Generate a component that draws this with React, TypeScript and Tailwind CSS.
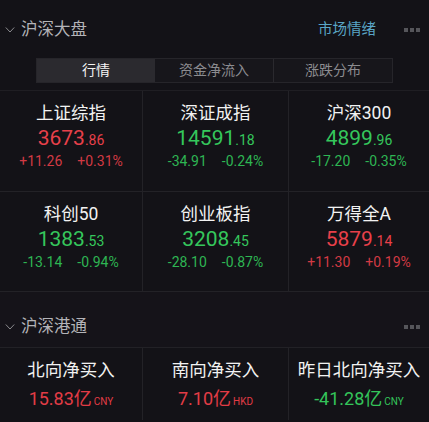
import React from "react";

type Quote = {
  name: string;
  int: string;
  dec: string;
  chg: string;
  pct: string;
  up: boolean;
};

const quotes: Quote[] = [
  { name: "上证综指", int: "3673", dec: ".86", chg: "+11.26", pct: "+0.31%", up: true },
  { name: "深证成指", int: "14591", dec: ".18", chg: "-34.91", pct: "-0.24%", up: false },
  { name: "沪深300", int: "4899", dec: ".96", chg: "-17.20", pct: "-0.35%", up: false },
  { name: "科创50", int: "1383", dec: ".53", chg: "-13.14", pct: "-0.94%", up: false },
  { name: "创业板指", int: "3208", dec: ".45", chg: "-28.10", pct: "-0.87%", up: false },
  { name: "万得全A", int: "5879", dec: ".14", chg: "+11.30", pct: "+0.19%", up: true },
];

const flows = [
  { name: "北向净买入", value: "15.83亿", unit: "CNY", up: true },
  { name: "南向净买入", value: "7.10亿", unit: "HKD", up: true },
  { name: "昨日北向净买入", value: "-41.28亿", unit: "CNY", up: false },
];

const font = { fontFamily: 'Roboto, "Noto Sans CJK SC", sans-serif' };

function Chevron() {
  return (
    <svg width="10" height="8" viewBox="0 0 10 8" className="mr-[6px]">
      <path d="M0.8 1.5 L5 6 L9.2 1.5" fill="none" stroke="#8a8a8e" strokeWidth="1" />
    </svg>
  );
}

function Dots() {
  return (
    <div className="flex gap-[2px]">
      <span className="w-[4px] h-[4px] bg-[#55555a]" />
      <span className="w-[4px] h-[4px] bg-[#55555a]" />
      <span className="w-[4px] h-[4px] bg-[#55555a]" />
    </div>
  );
}

function QuoteCell({ q, border }: { q: Quote; border: boolean }) {
  const main = q.up ? "text-[#e8404a]" : "text-[#35c75c]";
  const sub = q.up ? "text-[#d23a44]" : "text-[#2eb553]";
  return (
    <div className={`flex flex-col items-center pt-[10px] ${border ? "border-r border-[#232227]" : ""}`}>
      <div className="text-[17.5px] leading-[24px] text-[#f2f2f2]">{q.name}</div>
      <div className={`leading-[26px] ${main}`}>
        <span className="text-[21px]">{q.int}</span>
        <span className="text-[14px]">{q.dec}</span>
      </div>
      <div className={`flex gap-[15px] text-[14px] leading-[16px] ${sub}`}>
        <span>{q.chg}</span>
        <span>{q.pct}</span>
      </div>
    </div>
  );
}

export default function App() {
  return (
    <div className="w-[429px] h-[422px] overflow-hidden bg-[#131217]" style={font}>
      {/* 沪深大盘 header */}
      <div className="flex items-center pt-[18px] pl-[5px] pr-[9px] h-[42px]">
        <Chevron />
        <span className="text-[16.5px] leading-[24px] text-[#b4b4b8]">沪深大盘</span>
        <span className="ml-auto text-[14.5px] leading-[24px] text-[#5aa6c6]">市场情绪</span>
        <div className="ml-[28px]">
          <Dots />
        </div>
      </div>

      {/* tabs */}
      <div className="mt-[16px] mx-[36px] h-[25px] flex border border-[#26252a] bg-[#17161b] text-[14px]">
        <div className="flex-1 flex items-center justify-center bg-[#2b2a2f] text-[#f4f4f4]">行情</div>
        <div className="flex-1 flex items-center justify-center text-[#8c8c90] border-r border-[#2a292e]">资金净流入</div>
        <div className="flex-1 flex items-center justify-center text-[#8c8c90]">涨跌分布</div>
      </div>

      {/* index grid */}
      <div className="mt-[7px] border-t border-[#1f1e23]">
        <div className="grid grid-cols-[143px_146px_1fr] h-[101px] border-b border-[#232227]">
          {quotes.slice(0, 3).map((q, i) => (
            <QuoteCell key={q.name} q={q} border={i < 2} />
          ))}
        </div>
        <div className="grid grid-cols-[143px_146px_1fr] h-[100px] border-b border-[#232227]">
          {quotes.slice(3).map((q, i) => (
            <QuoteCell key={q.name} q={q} border={i < 2} />
          ))}
        </div>
      </div>

      {/* 沪深港通 header */}
      <div className="flex items-center pt-[23px] pb-[8px] pl-[5px] pr-[9px] bg-[#151319] border-b border-[#222126]">
        <Chevron />
        <span className="text-[16.5px] leading-[24px] text-[#b4b4b8]">沪深港通</span>
        <div className="ml-auto">
          <Dots />
        </div>
      </div>

      <div className="grid grid-cols-[143px_146px_1fr] h-[72px]">
        {flows.map((f, i) => (
          <div
            key={f.name}
            className={`flex flex-col items-center pt-[10px] ${i < 2 ? "border-r border-[#232227]" : ""}`}
          >
            <div className="text-[17.5px] leading-[24px] text-[#f2f2f2]">{f.name}</div>
            <div className={`mt-[4px] leading-[26px] ${f.up ? "text-[#e23c46]" : "text-[#34c45a]"}`}>
              <span className="text-[18px]">{f.value}</span>
              <span className="ml-[2px] text-[10px]">{f.unit}</span>
            </div>
          </div>
        ))}
      </div>
    </div>
  );
}
